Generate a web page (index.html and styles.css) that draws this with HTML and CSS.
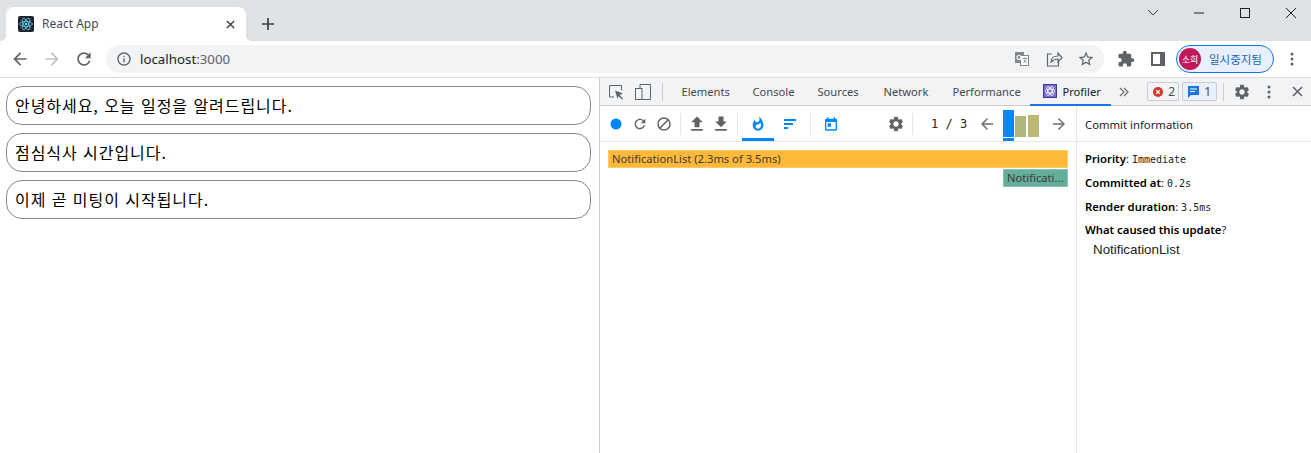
FILE: index.html
```html
<!DOCTYPE html>
<html lang="ko">
<head>
<meta charset="utf-8">
<title>React App</title>
<link rel="stylesheet" href="styles.css">
</head>
<body>
<header class="tabstrip">
  <div class="tab">
    <svg class="favicon" viewBox="0 0 16 16"><rect width="16" height="16" rx="2" fill="#20232a"/><g fill="none" stroke="#61dafb" stroke-width=".8"><ellipse cx="8" cy="8" rx="6.4" ry="2.5"/><ellipse cx="8" cy="8" rx="6.4" ry="2.5" transform="rotate(60 8 8)"/><ellipse cx="8" cy="8" rx="6.4" ry="2.5" transform="rotate(120 8 8)"/></g><circle cx="8" cy="8" r="1.3" fill="#61dafb"/></svg>
    <span class="tab-title">React App</span>
    <svg class="tab-close" viewBox="0 0 10 10"><path d="M1 1l8 8M9 1l-8 8" stroke="#3c4043" stroke-width="1.6" fill="none"/></svg>
  </div>
  <svg class="new-tab" viewBox="0 0 12 12"><path d="M6 0v12M0 6h12" stroke="#3c4043" stroke-width="1.7" fill="none"/></svg>
  <div class="winctl">
    <span class="winbtn"><svg width="12" height="8" viewBox="0 0 12 8"><path d="M1 1l5 5 5-5" stroke="#3c4043" fill="none"/></svg></span>
    <span class="winbtn"><svg width="10" height="2" viewBox="0 0 10 2"><path d="M0 1h10" stroke="#202124" fill="none"/></svg></span>
    <span class="winbtn"><svg width="10" height="10" viewBox="0 0 10 10"><rect x=".5" y=".5" width="9" height="9" stroke="#202124" fill="none"/></svg></span>
    <span class="winbtn"><svg width="10" height="10" viewBox="0 0 10 10"><path d="M0 0l10 10M10 0L0 10" stroke="#202124" fill="none"/></svg></span>
  </div>
</header>
<nav class="toolbar">
  <span class="slot"><svg class="ic20" viewBox="0 0 24 24"><path fill="#5f6368" d="M20 11H7.830l5.590-5.590L12 4l-8 8 8 8 1.410-1.410L7.830 13H20v-2z"/></svg></span>
  <span class="slot"><svg class="ic20" viewBox="0 0 24 24"><path fill="#bdc1c6" d="M4 11h12.170l-5.590-5.590L12 4l8 8-8 8-1.410-1.410L16.170 13H4v-2z"/></svg></span>
  <span class="slot"><svg class="ic20" viewBox="0 0 24 24"><path fill="#5f6368" d="M17.650 6.350A7.958 7.958 0 0012 4c-4.420 0-7.990 3.580-7.990 8s3.570 8 7.990 8c3.730 0 6.840-2.550 7.730-6h-2.080A5.990 5.990 0 0112 18c-3.310 0-6-2.690-6-6s2.690-6 6-6c1.660 0 3.140.69 4.220 1.780L13 11h7V4l-2.350 2.350z"/></svg></span>
  <div class="omnibox">
    <svg class="ic16" viewBox="0 0 24 24"><path fill="#5f6368" d="M11 7h2v2h-2zm0 4h2v6h-2zm1-9C6.480 2 2 6.480 2 12s4.480 10 10 10 10-4.480 10-10S17.520 2 12 2zm0 18c-4.410 0-8-3.590-8-8s3.590-8 8-8 8 3.590 8 8-3.590 8-8 8z"/></svg>
    <span class="url">localhost<span class="url-port">:3000</span></span>
    <span class="omni-actions">
      <span class="slot"><svg width="14" height="14" viewBox="0 0 14 14"><rect x="0" y="0" width="9" height="11" fill="#80868b"/><rect x="5.500" y="3.500" width="8" height="10" fill="#fff" stroke="#80868b"/><circle cx="4" cy="5.500" r="2" fill="none" stroke="#fff" stroke-width="1.100"/><path d="M7.500 6.500h4.500M9.750 5.500v1M11.500 7l-3 4M8.500 7.500l3 3.500" stroke="#80868b" stroke-width=".8" fill="none"/></svg></span>
      <span class="slot"><svg width="18" height="18" viewBox="0 0 18 18"><path d="M7 4H2.500v12h11v-4M6 12c0-4 3-6 7-6V3l4 4.500L13 12V9c-3 0-5 1-7 3z" fill="none" stroke="#5f6368" stroke-width="1.200"/></svg></span>
      <span class="slot"><svg class="ic18" viewBox="0 0 24 24"><path fill="#5f6368" d="M22 9.240l-7.190-.62L12 2 9.190 8.630 2 9.240l5.460 4.730L5.820 21 12 17.270 18.180 21l-1.630-7.030L22 9.240zM12 15.400l-3.760 2.270 1-4.280-3.320-2.880 4.380-.38L12 6.100l1.710 4.040 4.380.38-3.320 2.880 1 4.280L12 15.400z"/></svg></span>
    </span>
  </div>
  <span class="slot ext"><svg class="ic18" viewBox="0 0 24 24"><path fill="#5f6368" d="M20.500 11H19V7c0-1.100-.9-2-2-2h-4V3.500C13 2.120 11.880 1 10.500 1S8 2.120 8 3.500V5H4c-1.100 0-1.990.9-1.990 2v3.800H3.500c1.490 0 2.700 1.210 2.700 2.700s-1.210 2.700-2.700 2.700H2V20c0 1.100.9 2 2 2h3.800v-1.500c0-1.490 1.210-2.700 2.700-2.700 1.490 0 2.700 1.210 2.700 2.700V22H17c1.100 0 2-.9 2-2v-4h1.500c1.380 0 2.500-1.120 2.500-2.500S21.880 11 20.500 11z"/></svg></span>
  <span class="slot"><svg width="14" height="14" viewBox="0 0 14 14"><rect width="14" height="14" fill="#5f6368"/><rect x="2" y="2" width="7" height="10" fill="#fff"/></svg></span>
  <div class="profile"><span class="avatar">소희</span><span class="paused">일시중지됨</span></div>
  <span class="slot"><svg width="4" height="14" viewBox="0 0 4 14"><circle cx="2" cy="2" r="1.500" fill="#5f6368"/><circle cx="2" cy="7" r="1.500" fill="#5f6368"/><circle cx="2" cy="12" r="1.500" fill="#5f6368"/></svg></span>
</nav>
<main class="viewport">
  <section class="page">
    <div class="note">안녕하세요, 오늘 일정을 알려드립니다.</div>
    <div class="note">점심식사 시간입니다.</div>
    <div class="note">이제 곧 미팅이 시작됩니다.</div>
  </section>
  <section class="devtools">
    <div class="dt-tabs">
      <span class="dt-icon"><svg width="18" height="18" viewBox="0 0 18 18"><path d="M7 14H2.500V2.500h12V7" fill="none" stroke="#5f6368"/><path d="M8 7.500l8 3-3.300 1.400L16 15.500l-1 1-3.500-3.500-1 3z" fill="#5f6368"/></svg></span>
      <span class="dt-icon"><svg width="18" height="18" viewBox="0 0 18 18"><path d="M6 5V1.500h10.500v15H8" fill="none" stroke="#5f6368"/><rect x="1.500" y="5.500" width="6.500" height="11" fill="none" stroke="#5f6368"/></svg></span>
      <span class="dt-sep"></span>
      <div class="dt-tablist">
        <span class="dt-tab">Elements</span>
        <span class="dt-tab">Console</span>
        <span class="dt-tab">Sources</span>
        <span class="dt-tab">Network</span>
        <span class="dt-tab">Performance</span>
        <span class="dt-tab dt-tab-active"><svg width="14" height="14" viewBox="0 0 14 14"><rect width="14" height="14" fill="#3e3a8c"/><rect x="1" y="1" width="12" height="12" fill="#7b6bd6"/><g fill="none" stroke="#fff" stroke-width=".8"><ellipse cx="7" cy="7" rx="5" ry="2"/><ellipse cx="7" cy="7" rx="5" ry="2" transform="rotate(60 7 7)"/><ellipse cx="7" cy="7" rx="5" ry="2" transform="rotate(120 7 7)"/></g></svg>Profiler</span>
      </div>
      <span class="dt-more"><svg width="10" height="10" viewBox="0 0 10 10"><path d="M1 1l4 4-4 4M5 1l4 4-4 4" fill="none" stroke="#6e7276" stroke-width="1.200"/></svg></span>
      <span class="badge badge-err"><svg width="12" height="12" viewBox="0 0 12 12"><circle cx="6" cy="6" r="5" fill="#d93025"/><path d="M4 4l4 4M8 4l-4 4" stroke="#fff" stroke-width="1.200"/></svg>2</span>
      <span class="badge badge-msg"><svg width="13" height="13" viewBox="0 0 13 13"><path d="M1 1h11v9H4l-3 3z" fill="#1a73e8"/><path d="M3 4h7M3 6.500h5" stroke="#fff"/></svg>1</span>
      <span class="dt-sep dt-sep-r"></span>
      <span class="dt-act dt-gear"><svg class="ic18" viewBox="0 0 24 24"><path fill="#5f6368" d="M19.140 12.940c.04-.3.06-.61.06-.94 0-.32-.02-.64-.07-.94l2.030-1.580a.49.49 0 00.12-.61l-1.920-3.320a.488.488 0 00-.59-.22l-2.390.96c-.5-.38-1.030-.7-1.620-.94l-.36-2.540a.484.484 0 00-.48-.41h-3.840c-.24 0-.43.17-.47.41l-.36 2.540c-.59.24-1.130.57-1.620.94l-2.390-.96c-.22-.08-.47 0-.59.22L2.740 8.870c-.12.21-.08.47.12.61l2.030 1.580c-.05.3-.09.63-.09.94s.02.64.07.94l-2.030 1.580a.49.49 0 00-.12.61l1.920 3.320c.12.22.37.29.59.22l2.390-.96c.5.38 1.030.7 1.620.94l.36 2.540c.05.24.24.41.48.41h3.840c.24 0 .44-.17.47-.41l.36-2.540c.59-.24 1.130-.56 1.620-.94l2.390.96c.22.08.47 0 .59-.22l1.920-3.320c.12-.22.07-.47-.12-.61l-2.010-1.580zM12 15.600c-1.980 0-3.600-1.620-3.600-3.600s1.620-3.600 3.600-3.600 3.600 1.620 3.600 3.600-1.620 3.600-3.600 3.600z"/></svg></span>
      <span class="dt-act"><svg width="4" height="14" viewBox="0 0 4 14"><circle cx="2" cy="2" r="1.500" fill="#5f6368"/><circle cx="2" cy="7" r="1.500" fill="#5f6368"/><circle cx="2" cy="12" r="1.500" fill="#5f6368"/></svg></span>
      <span class="dt-act"><svg width="11" height="11" viewBox="0 0 11 11"><path d="M1 1l9 9M10 1l-9 9" stroke="#5f6368" stroke-width="1.600" fill="none"/></svg></span>
    </div>
    <div class="profiler">
      <div class="prof-main">
        <div class="prof-bar">
          <span class="pb pb-first"><svg width="12" height="12" viewBox="0 0 12 12"><circle cx="6" cy="6" r="5.500" fill="#0088fa"/></svg></span>
          <span class="pb"><svg class="ic16" viewBox="0 0 24 24"><path fill="#5f6368" d="M17.650 6.350A7.958 7.958 0 0012 4c-4.420 0-7.990 3.580-7.990 8s3.570 8 7.990 8c3.730 0 6.840-2.550 7.730-6h-2.080A5.990 5.990 0 0112 18c-3.310 0-6-2.690-6-6s2.690-6 6-6c1.660 0 3.140.69 4.220 1.780L13 11h7V4l-2.350 2.350z"/></svg></span>
          <span class="pb"><svg width="14" height="14" viewBox="0 0 14 14"><circle cx="7" cy="7" r="6" fill="none" stroke="#5f6368" stroke-width="1.500"/><path d="M2.800 11.200l8.400-8.400" stroke="#5f6368" stroke-width="1.500"/></svg></span>
          <span class="pb-sep"></span>
          <span class="pb"><svg class="ic20" viewBox="0 0 24 24"><path fill="#5f6368" d="M9 16h6v-6h4l-7-7-7 7h4zm-4 2h14v2H5z"/></svg></span>
          <span class="pb"><svg class="ic20" viewBox="0 0 24 24"><path fill="#5f6368" d="M19 9h-4V3H9v6H5l7 7 7-7zM5 18v2h14v-2H5z"/></svg></span>
          <span class="pb-sep"></span>
          <span class="pb pb-chart pb-on"><svg class="ic16" viewBox="0 0 24 24"><path fill="#0088fa" d="M13.500.67s.74 2.650.74 4.800c0 2.060-1.350 3.730-3.410 3.730-2.070 0-3.630-1.670-3.630-3.730l.03-.36C5.210 7.510 4 10.620 4 14c0 4.420 3.580 8 8 8s8-3.580 8-8C20 8.610 17.410 3.800 13.500.67zM11.710 19c-1.780 0-3.220-1.400-3.220-3.140 0-1.620 1.050-2.760 2.810-3.120 1.770-.36 3.600-1.210 4.620-2.580.39 1.290.59 2.650.59 4.040 0 2.650-2.150 4.800-4.800 4.800z"/></svg></span>
          <span class="pb pb-chart"><svg width="12" height="10" viewBox="0 0 12 10"><path d="M0 0h12v2H0zM0 4h9v2H0zM0 8h4v2H0z" fill="#0088fa"/></svg></span>
          <span class="pb-sep pb-sep-cal"></span>
          <span class="pb pb-cal"><svg class="ic16" viewBox="0 0 24 24"><path fill="#0088fa" d="M19 4h-1V2h-2v2H8V2H6v2H5a2 2 0 00-2 2v14a2 2 0 002 2h14a2 2 0 002-2V6a2 2 0 00-2-2zm0 16H5V9h14v11zM7 11h5v5H7z"/></svg></span>
          <span class="pb pb-set"><svg class="ic18" viewBox="0 0 24 24"><path fill="#5f6368" d="M19.140 12.940c.04-.3.06-.61.06-.94 0-.32-.02-.64-.07-.94l2.030-1.580a.49.49 0 00.12-.61l-1.920-3.320a.488.488 0 00-.59-.22l-2.390.96c-.5-.38-1.030-.7-1.620-.94l-.36-2.540a.484.484 0 00-.48-.41h-3.840c-.24 0-.43.17-.47.41l-.36 2.540c-.59.24-1.130.57-1.620.94l-2.390-.96c-.22-.08-.47 0-.59.22L2.740 8.870c-.12.21-.08.47.12.61l2.030 1.580c-.05.3-.09.63-.09.94s.02.64.07.94l-2.030 1.580a.49.49 0 00-.12.61l1.920 3.320c.12.22.37.29.59.22l2.390-.96c.5.38 1.030.7 1.620.94l.36 2.540c.05.24.24.41.48.41h3.840c.24 0 .44-.17.47-.41l.36-2.540c.59-.24 1.130-.56 1.620-.94l2.390.96c.22.08.47 0 .59-.22l1.920-3.320c.12-.22.07-.47-.12-.61l-2.010-1.580zM12 15.600c-1.980 0-3.600-1.620-3.600-3.600s1.620-3.600 3.600-3.600 3.600 1.620 3.600 3.600-1.620 3.600-3.600 3.600z"/></svg></span>
          <span class="pb-sep pb-sep-page"></span>
          <span class="pager">1 / 3</span>
          <span class="pb pb-prev"><svg class="ic18" viewBox="0 0 24 24"><path fill="#6e7276" d="M20 11H7.830l5.590-5.590L12 4l-8 8 8 8 1.410-1.410L7.830 13H20v-2z"/></svg></span>
          <div class="commits">
            <span class="commit commit-a"></span>
            <span class="commit commit-b"></span>
            <span class="commit commit-c"></span>
          </div>
          <span class="pb pb-next"><svg class="ic18" viewBox="0 0 24 24"><path fill="#6e7276" d="M4 11h12.170l-5.590-5.590L12 4l8 8-8 8-1.410-1.410L16.170 13H4v-2z"/></svg></span>
        </div>
        <div class="flame">
          <div class="fbar fbar-root">NotificationList (2.3ms of 3.5ms)</div>
          <div class="fbar fbar-child">Notificati...</div>
        </div>
      </div>
      <aside class="commit-info">
        <div class="ci-head">Commit information</div>
        <div class="ci-body">
          <p class="ci-row"><b>Priority</b>: <code>Immediate</code></p>
          <p class="ci-row"><b>Committed at</b>: <code>0.2s</code></p>
          <p class="ci-row ci-row-short"><b>Render duration</b>: <code>3.5ms</code></p>
          <p class="ci-row ci-why"><b>What caused this update</b>?</p>
          <p class="ci-cause">NotificationList</p>
        </div>
      </aside>
    </div>
  </section>
</main>
</body>
</html>
```
FILE: styles.css
```css
* { box-sizing: border-box; }
html, body { margin: 0; height: 100%; overflow: hidden; background: #fff; }
body { width: 1311px; height: 453px; font-family: "Noto Sans", "Noto Sans CJK KR", sans-serif; color: #202124; }
svg { display: block; flex: none; }
.ic20 { width: 20px; height: 20px; }
.ic18 { width: 18px; height: 18px; }
.ic16 { width: 16px; height: 16px; }

.tabstrip { height: 41px; background: #dee1e6; display: flex; padding-left: 6px; }
.tab { position: relative; width: 240px; height: 34px; margin-top: 7px; background: #fff; border-radius: 8px 8px 0 0; display: flex; align-items: center; padding: 0 11px 0 12px; }
.tab::before, .tab::after { content: ""; position: absolute; bottom: 0; width: 6px; height: 6px; }
.tab::before { left: -6px; background: radial-gradient(circle at 0 0, transparent 6px, #fff 6.5px); }
.tab::after { right: -6px; background: radial-gradient(circle at 100% 0, transparent 6px, #fff 6.5px); }
.favicon { width: 16px; height: 16px; }
.tab-title { margin: -2px 0 0 8px; font-size: 12px; color: #45494e; flex: 1; }
.tab-close { width: 9px; height: 9px; }
.new-tab { width: 12px; height: 12px; margin: 18px 0 0 16px; }
.winctl { margin: 0 -3px 0 auto; display: flex; }
.winbtn { width: 46px; height: 26px; display: flex; align-items: center; justify-content: center; }

.toolbar { height: 37px; display: flex; align-items: flex-start; padding: 4px 0 0 4px; border-bottom: 1px solid #dadce0; }
.slot { width: 32px; height: 28px; display: flex; align-items: center; justify-content: center; flex: none; }
.omnibox { width: 998px; height: 28px; margin-left: 6px; border-radius: 14px; background: #f1f3f4; display: flex; align-items: center; padding: 0 2px 0 10px; }
.url { margin-left: 8px; font-size: 13.300px; color: #202124; }
.url-port { color: #5f6368; }
.omni-actions { margin-left: auto; display: flex; }
.ext { margin-left: 6px; }
.profile { width: 98px; height: 28px; margin-left: 2px; border: 1px solid #1a73e8; border-radius: 14px; background: #e8f0fe; display: flex; align-items: center; padding-left: 2px; }
.avatar { width: 22px; height: 22px; border-radius: 50%; background: #c2185b; color: #fff; font-size: 9px; display: flex; align-items: center; justify-content: center; font-family: "Noto Sans CJK KR", sans-serif; }
.paused { margin-left: 8px; font-size: 11.500px; color: #1a5fb4; font-family: "Noto Sans CJK KR", sans-serif; }
.profile + .slot { margin-left: 2px; }

.viewport { height: 375px; display: flex; }
.page { width: 599px; padding: 8px 8px 0 6px; display: flex; flex-direction: column; gap: 8px; }
.note { height: 39px; border: 1px solid #8a8a8a; border-radius: 16px; padding-left: 8px; font-size: 16px; letter-spacing: .95px; line-height: 37px; color: #000; font-family: "Noto Sans CJK KR", sans-serif; }

.devtools { width: 712px; border-left: 1px solid #cbcdd1; display: flex; flex-direction: column; }
.dt-tabs { height: 28px; background: #f1f3f4; border-bottom: 1px solid #cbcdd1; display: flex; align-items: center; padding-left: 3px; font-size: 11.200px; color: #45494e; }
.dt-icon { width: 27px; height: 27px; display: flex; align-items: center; justify-content: center; }
.dt-sep { width: 1px; height: 18px; background: #cbcdd1; margin: 0 18px 0 6px; }
.dt-tablist { display: flex; height: 27px; }
.dt-tab { display: flex; align-items: center; height: 27px; }
.dt-tab:nth-child(1) { width: 71px; }
.dt-tab:nth-child(2) { width: 65px; }
.dt-tab:nth-child(3) { width: 66px; }
.dt-tab:nth-child(4) { width: 69px; }
.dt-tab:nth-child(5) { width: 78px; }
.dt-tab-active { width: 81px; padding-left: 13px; gap: 5px; color: #202124; border-bottom: 2px solid #1a73e8; margin-bottom: -1px; height: 28px; }
.dt-more { width: 26px; display: flex; justify-content: center; }
.badge { height: 19px; margin-left: 10px; border: 1px solid #cbcdd1; border-radius: 2px; display: flex; align-items: center; gap: 4px; padding: 0 4px; font-size: 12px; }
.badge-err { width: 32px; margin-left: 10px; }
.badge-msg { width: 35px; margin-left: 3px; background: #e8f0fe; }
.dt-sep-r { margin: 0 0 0 6px; }
.dt-act { width: 28px; height: 27px; display: flex; align-items: center; justify-content: center; }
.dt-gear { margin-left: 4px; }

.profiler { flex: 1; display: flex; }
.prof-main { width: 476px; }
.prof-bar { height: 36px; border-bottom: 1px solid #e8e8e8; display: flex; align-items: center; padding-left: 4px; }
.pb { width: 24px; height: 35px; display: flex; align-items: center; justify-content: center; flex: none; }
.pb-sep { width: 1px; height: 22px; background: #e6e6e6; margin: 0 4px; flex: none; }
.pb-chart { width: 32px; }
.pb-on { box-shadow: inset 0 -3px 0 #0088fa; }
.pb-sep-cal { margin-left: 4px; margin-right: 8px; }
.pb-set { margin-left: 41px; }
.pb-sep-page { margin: 0 18px 0 4px; }
.pager { font: 12px "DejaVu Sans Mono", monospace; width: 36px; color: #202124; white-space: pre; flex: none; }
.pb-prev { margin-left: 8px; }
.commits { width: 36px; height: 35px; margin-left: 4px; display: flex; align-items: flex-end; gap: 1px; flex: none; }
.commit { display: block; width: 11px; flex: none; }
.commit-a { height: 31px; background: linear-gradient(#0088fa 27px, #fff 27px, #fff 28px, #0088fa 28px); }
.commit-b { height: 21px; margin-bottom: 4px; background: #aeb87c; }
.commit-c { height: 22px; margin-bottom: 4px; margin-left: 1px; background: #bcb977; }
.pb-next { margin-left: 8px; }
.flame { padding: 8px 8px 0 8px; display: flex; flex-direction: column; gap: 1px; font-size: 11.200px; }
.fbar { height: 18px; line-height: 17px; padding-left: 4px; color: #3a3a3a; white-space: nowrap; overflow: hidden; box-shadow: inset 0 0 0 1px rgba(255, 255, 255, .25); }
.fbar-root { background: #ffb938; }
.fbar-child { width: 65px; margin-left: 395px; background: #64ae9c; }

.commit-info { flex: 1; border-left: 1px solid #e8e8e8; }
.ci-head { height: 36px; padding-left: 8px; border-bottom: 1px solid #e8e8e8; font-size: 11.300px; line-height: 38px; color: #202124; }
.ci-body { padding: 8px 8px 0; font-size: 11.300px; color: #202124; }
.ci-row { margin: 0; height: 24px; line-height: 18px; }
.ci-row b { font-weight: 600; color: #000; }
.ci-row code { font: 10px "DejaVu Sans Mono", monospace; }
.ci-row-short { height: 23px; }
.ci-why { height: 21px; }
.ci-cause { margin: 0 0 0 8px; font: 13.333px "Liberation Sans", sans-serif; color: #202124; line-height: 15px; }
```
